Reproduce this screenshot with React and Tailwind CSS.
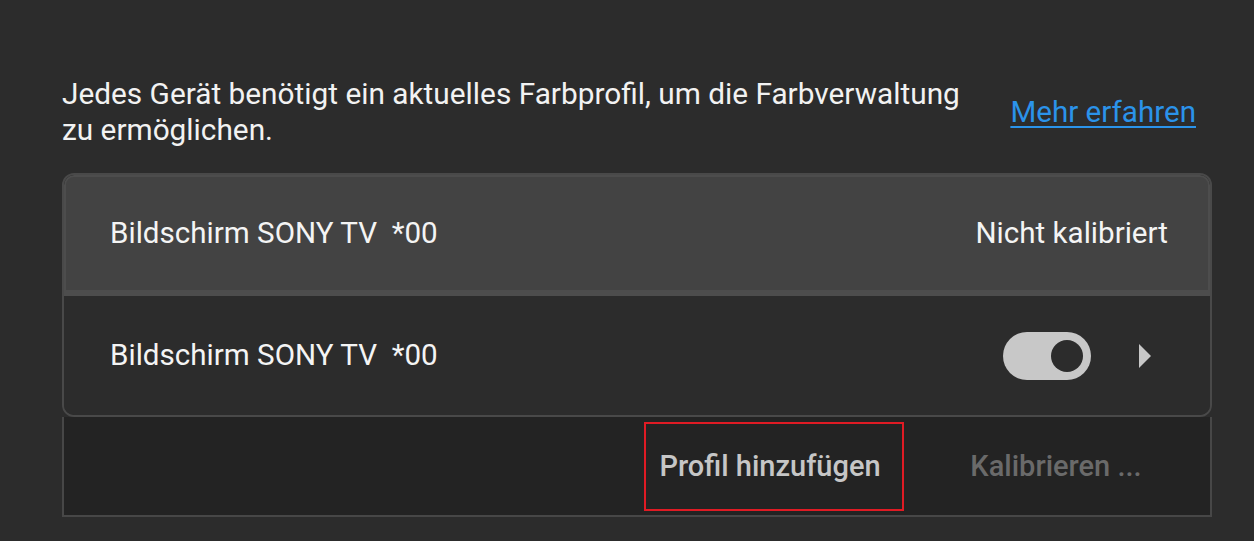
import React from 'react';

const Toggle = () => (
  <div className="flex items-center justify-end w-[88px] h-[48px] rounded-full bg-[#c8c8c8] pr-[8px]">
    <div className="w-[32px] h-[32px] rounded-full bg-[#2c2c2c]" />
  </div>
);

const Chevron = () => (
  <svg width="12" height="24" viewBox="0 0 12 24" className="block">
    <polygon points="0,0 12,12 0,24" fill="#c8c8c8" />
  </svg>
);

const App = () => {
  return (
    <div
      className="w-[1254px] h-[541px] bg-[#2c2c2c] pl-[62px] pr-[42px] pt-[76px] overflow-hidden"
      style={{ fontFamily: 'Roboto, "Liberation Sans", sans-serif' }}
    >
      {/* Kopfzeile */}
      <div className="flex items-center justify-between">
        <p className="w-[910px] text-[29.8px] leading-[36px] text-[#f2f2f2]">
          Jedes Gerät benötigt ein aktuelles Farbprofil, um die Farbverwaltung zu ermöglichen.
        </p>
        <a href="#" className="mr-[16px] text-[29.6px] leading-[36px] text-[#2b93ea] underline underline-offset-[4px]">
          Mehr erfahren
        </a>
      </div>

      {/* Geräteliste */}
      <div className="mt-[25px] rounded-[12px] border-2 border-[#494949] overflow-hidden">
        <div className="flex items-center justify-between h-[121px] bg-[#434343] border-[2px] border-b-[6px] border-[#4d4d4d] rounded-t-[10px] pl-[44px] pr-[40px]">
          <span className="text-[29.6px] text-[#f4f4f4] whitespace-pre">Bildschirm SONY TV  *00</span>
          <span className="text-[29.6px] text-[#f4f4f4]">Nicht kalibriert</span>
        </div>
        <div className="flex items-center justify-between h-[119px] bg-[#2c2c2c] pl-[46px] pr-[59px]">
          <span className="text-[29.6px] text-[#f4f4f4] whitespace-pre">Bildschirm SONY TV  *00</span>
          <div className="flex items-center gap-[48px]">
            <Toggle />
            <Chevron />
          </div>
        </div>
      </div>

      {/* Aktionen */}
      <div className="flex items-start justify-end h-[100px] bg-[#232323] border-x-2 border-b-2 border-[#474747] pt-[5px] pr-[54px]">
        <button className="flex items-center justify-center w-[260px] h-[89px] border-2 border-[#e01b24] pr-[8px] text-[29px] font-medium text-[#c6c6c6]">
          Profil hinzufügen
        </button>
        <button className="flex items-center justify-center w-[200px] h-[89px] ml-[52px] text-[29px] font-medium text-[#6a6a6a]">
          Kalibrieren ...
        </button>
      </div>
    </div>
  );
};

export default App;
